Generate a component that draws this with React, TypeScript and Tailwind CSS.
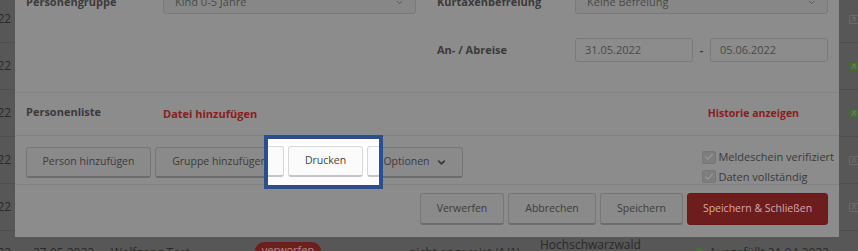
import { ChevronDown, Check, User } from 'lucide-react';

type Tone = 'dim' | 'light';

const btnTone = {
  dim: 'bg-[#8a8a8a] border-[#777777] border-b-[#6c6c6c] text-[#3c3c3c]',
  light: 'bg-[#fbfbfb] border-[#d8d8d8] border-b-[#c4c4c4] text-[#444444]'
};

const Btn = ({ label, w, tone, chevron }: { label: string; w: string; tone: Tone; chevron?: boolean }) => (
  <div
    className={`${w} ${btnTone[tone]} h-[31px] shrink-0 rounded-[3px] border border-b-2 flex items-center justify-center gap-[6px] text-[10.5px]`}
  >
    <span>{label}</span>
    {chevron && <ChevronDown className="w-[11px] h-[11px]" strokeWidth={4} />}
  </div>
);

const ActionRow = ({ tone }: { tone: Tone }) => (
  <div className="flex gap-[4px]">
    <Btn label="Person hinzufügen" w="w-[125px]" tone={tone} />
    <Btn label="Gruppe hinzufügen" w="w-[129px]" tone={tone} />
    <Btn label="Drucken" w="w-[75px]" tone={tone} />
    <Btn label="Optionen" w="w-[96px]" tone={tone} chevron />
  </div>
);

const rows = [
  { date: '31.05.2022', icon: 'gray' },
  { date: '30.05.2022', icon: 'green' },
  { date: '29.05.2022', icon: 'green' },
  { date: '28.05.2022', icon: 'gray' },
  { date: '28.05.2022', icon: 'gray' }
];

const RowIcon = ({ kind }: { kind: string }) => (
  <div
    className={`w-[12px] h-[9px] border rounded-[1px] flex items-center justify-start pl-[1px] ${
      kind === 'green' ? 'border-[#3d6b2c] bg-[#4c7a38]/40 text-[#5b8f44]' : 'border-[#6a6a6a] text-[#6e6e6e]'
    }`}
  >
    <User className="w-[6px] h-[6px]" strokeWidth={4} />
  </div>
);

const Checkbox = ({ label }: { label: string }) => (
  <div className="flex items-center gap-[2px]">
    <div className="w-[14px] h-[13px] rounded-[2px] bg-[#7e7e7e] border border-[#777777] flex items-center justify-center">
      <Check className="w-[10px] h-[10px] text-[#989898]" strokeWidth={3} />
    </div>
    <span className="text-[11px] text-[#3a3a3a]">{label}</span>
  </div>
);

export default function App() {
  return (
    <div className="relative w-[858px] h-[251px] overflow-hidden bg-[#575757] font-['Open_Sans',sans-serif]">
      {/* page table behind the modal */}
      <div className="-mt-[4px] flex flex-col text-[12px] text-[#2a2a2a]">
        {rows.map((r, i) => (
          <div key={i} className="h-[47px] border-b border-[#4e4e4e] flex items-center shrink-0">
            <span className="-ml-[50px] w-[900px] whitespace-nowrap">{r.date}</span>
            <div className="absolute right-[-3px]">
              <RowIcon kind={r.icon} />
            </div>
          </div>
        ))}
        <div className="h-[47px] flex items-start pt-[13px] whitespace-nowrap text-[#2a2a2a]">
          <span className="-ml-[50px] w-[83px] shrink-0">25.05.2022</span>
          <span className="w-[78px] shrink-0">27.05.2022</span>
          <span className="w-[144px] shrink-0">Wolfgang Test</span>
          <span className="w-[66px] shrink-0 h-[18px] rounded-full bg-[#6e1f1c] text-[#b58a88] text-[11px] text-center -mt-[2px]">
            verworfen
          </span>
          <span className="w-[88px] shrink-0" />
          <span className="w-[131px] shrink-0">nicht angereist (1/1)</span>
          <span className="w-[155px] shrink-0 -mt-[8px]">Hochschwarzwald</span>
          <span className="flex items-center gap-[5px] w-[150px] shrink-0">
            <span className="w-[9px] h-[9px] rotate-45 bg-[#3f7a2a]" />
            Ausgefüllt 21.04.2022
          </span>
        </div>
      </div>

      {/* modal */}
      <div className="absolute left-[15px] top-0 w-[824px] h-[237px] overflow-hidden bg-[#8c8c8c] text-[#3a3a3a]">
        <div className="-mt-[10px] flex items-center h-[24px] px-[11px]">
          <span className="w-[137px] text-[11px] font-bold">Personengruppe</span>
          <div className="w-[253px] h-[24px] rounded-[3px] border border-[#7a7a7a] bg-[#878787] flex items-center justify-between px-[11px] text-[11px] text-[#4a4a4a]">
            <span>Kind 0-5 Jahre</span>
            <ChevronDown className="w-[9px] h-[9px]" />
          </div>
          <span className="w-[21px]" />
          <span className="w-[138px] text-[11px] font-bold">Kurtaxenbefreiung</span>
          <div className="w-[253px] h-[24px] rounded-[3px] border border-[#7a7a7a] bg-[#878787] flex items-center justify-between px-[11px] text-[11px] text-[#4a4a4a]">
            <span>Keine Befreiung</span>
            <ChevronDown className="w-[9px] h-[9px]" />
          </div>
        </div>

        <div className="mt-[24px] mb-[30px] flex items-center h-[24px] px-[11px]">
          <span className="w-[411px]" />
          <span className="w-[138px] text-[11px] font-bold">An- / Abreise</span>
          <div className="w-[118px] h-[24px] rounded-[3px] border border-[#7a7a7a] flex items-center px-[9px] text-[11px] text-[#4a4a4a]">
            31.05.2022
          </div>
          <span className="w-[17px] text-center text-[11px] font-bold">-</span>
          <div className="w-[118px] h-[24px] rounded-[3px] border border-[#7a7a7a] flex items-center px-[9px] text-[11px] text-[#4a4a4a]">
            05.06.2022
          </div>
        </div>

        <div className="border-t border-[#818181] h-[43px] flex items-center px-[11px] text-[11px] font-bold">
          <span className="w-[137px] -mt-[3px]">Personenliste</span>
          <span className="text-[#872020]">Datei hinzufügen</span>
          <span className="ml-auto mr-[29px] text-[#872020] text-[10.5px]">Historie anzeigen</span>
        </div>

        <div className="border-t border-[#818181] h-[49px] flex items-start pt-[11px] px-[11px]">
          <ActionRow tone="dim" />
          <div className="ml-auto mr-[-6px] mt-[2px] flex flex-col gap-[3px]">
            <Checkbox label="Meldeschein verifiziert" />
            <Checkbox label="Daten vollständig" />
          </div>
        </div>

        <div className="border-t border-[#818181] pt-[8px] px-[11px] flex justify-end gap-[4px]">
          <Btn label="Verwerfen" w="w-[84px] h-[32px]" tone="dim" />
          <Btn label="Abbrechen" w="w-[88px] h-[32px]" tone="dim" />
          <Btn label="Speichern" w="w-[83px] h-[32px]" tone="dim" />
          <div className="w-[141px] h-[32px] rounded-[3px] bg-[#6e1d1d] border border-[#661a1a] flex items-center justify-center text-[10.5px] text-[#d2aaaa]">
            Speichern &amp; Schließen
          </div>
        </div>
      </div>

      {/* highlight over the print button */}
      <div className="absolute left-[264px] top-[135px] w-[119px] h-[54px] border-4 border-[#2c4e8c] bg-white overflow-hidden">
        <div className="absolute left-[-242px] top-[7px]">
          <ActionRow tone="light" />
        </div>
      </div>
    </div>
  );
}
